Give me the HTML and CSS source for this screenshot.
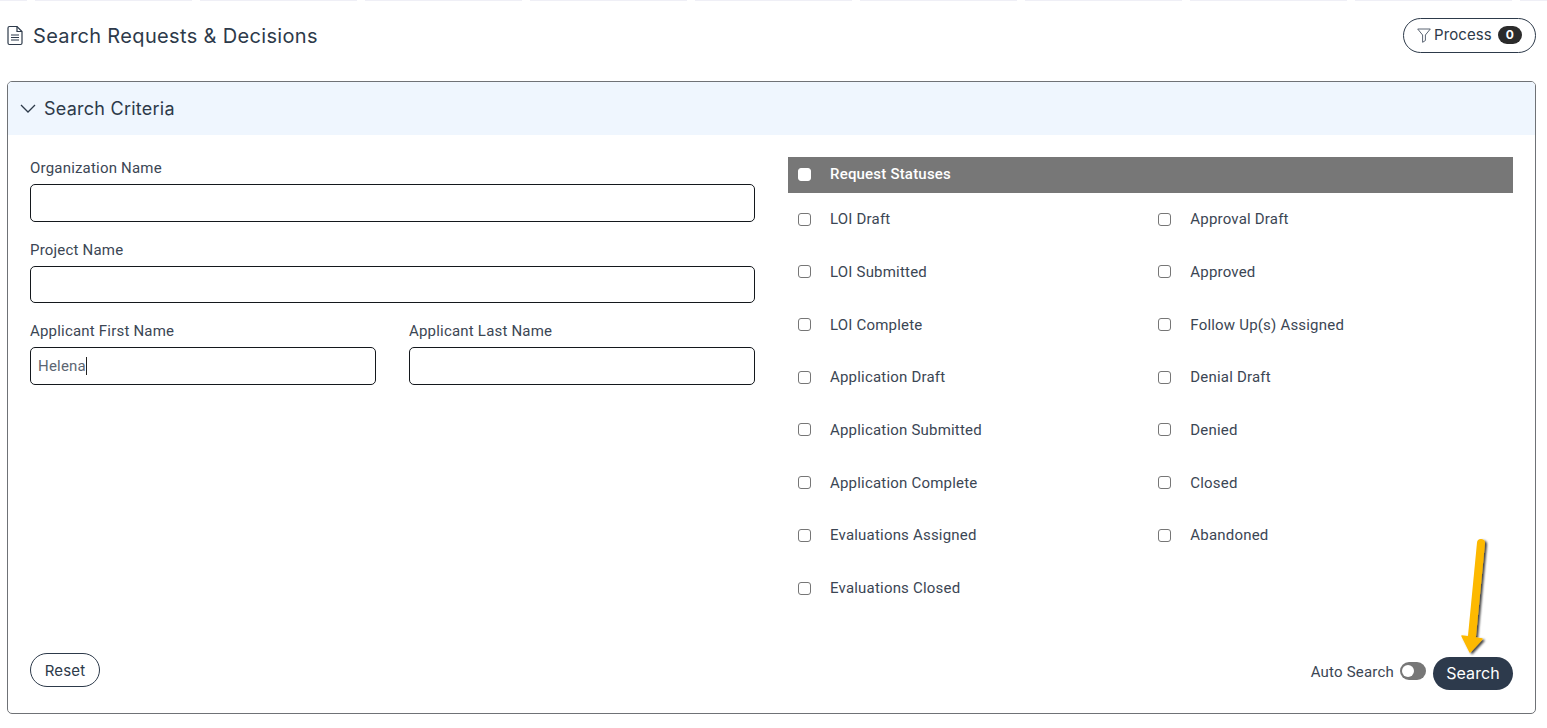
FILE: index.html
```html
<!DOCTYPE html>
<html lang="en">
<head>
    <meta charset="UTF-8">
    <title>Search Requests &amp; Decisions</title>
    <link rel="stylesheet" href="styles.css">
</head>
<body>
    <div class="top-strip"></div>
    <div class="page-header">
        <h1 class="page-title">
            <svg class="doc-icon" width="16" height="21" viewBox="0 0 16 20" fill="none" stroke="#2d3a4a" stroke-width="1.200">
                <path d="M2.500 1h7.500l5 5v11.500a1.500 1.500 0 0 1-1.500 1.500h-11a1.500 1.500 0 0 1-1.500-1.500v-15a1.500 1.500 0 0 1 1.500-1.500z"/>
                <path d="M10 1v5h5M4 9.500h8M4 12h8M4 14.500h8"/>
            </svg>
            Search Requests &amp; Decisions
        </h1>
        <button class="process-btn">
            <svg width="14" height="15" viewBox="0 0 14 15" fill="none" stroke="#5a6472" stroke-width="1">
                <path d="M.7 1h12.600l-4.900 6v5.500l-2.800 1.800v-7.300z"/>
            </svg>
            <span class="process-label">Process</span> <span class="count">0</span>
        </button>
    </div>

    <section class="panel">
        <div class="panel-head">
            <svg width="16" height="9" viewBox="0 0 16 9" fill="none" stroke="#2d3a4a" stroke-width="1.300">
                <path d="M1 1l7 7 7-7"/>
            </svg>
            Search Criteria
        </div>
        <div class="panel-body">
            <div class="columns">
                <div class="fields">
                    <div class="field">
                        <label>Organization Name</label>
                        <input type="text">
                    </div>
                    <div class="field">
                        <label>Project Name</label>
                        <input type="text">
                    </div>
                    <div class="field-row">
                        <div class="field">
                            <label>Applicant First Name</label>
                            <div class="input-fake">Helena<span class="caret"></span></div>
                        </div>
                        <div class="field">
                            <label>Applicant Last Name</label>
                            <input type="text">
                        </div>
                    </div>
                </div>
                <div class="statuses">
                    <div class="status-head">
                        <span class="box box-white"></span>
                        Request Statuses
                    </div>
                    <div class="status-grid">
                        <div class="status-col">
                            <div class="status"><span class="box"></span>LOI Draft</div>
                            <div class="status"><span class="box"></span>LOI Submitted</div>
                            <div class="status"><span class="box"></span>LOI Complete</div>
                            <div class="status"><span class="box"></span>Application Draft</div>
                            <div class="status"><span class="box"></span>Application Submitted</div>
                            <div class="status"><span class="box"></span>Application Complete</div>
                            <div class="status"><span class="box"></span>Evaluations Assigned</div>
                            <div class="status"><span class="box"></span>Evaluations Closed</div>
                        </div>
                        <div class="status-col">
                            <div class="status"><span class="box"></span>Approval Draft</div>
                            <div class="status"><span class="box"></span>Approved</div>
                            <div class="status"><span class="box"></span>Follow Up(s) Assigned</div>
                            <div class="status"><span class="box"></span>Denial Draft</div>
                            <div class="status"><span class="box"></span>Denied</div>
                            <div class="status"><span class="box"></span>Closed</div>
                            <div class="status"><span class="box"></span>Abandoned</div>
                        </div>
                    </div>
                </div>
            </div>
            <div class="panel-foot">
                <button class="reset-btn">Reset</button>
                <div class="foot-right">
                    <span class="auto-label">Auto Search</span>
                    <span class="toggle"><span class="knob"></span></span>
                    <button class="search-btn">Search</button>
                </div>
            </div>
        </div>
    </section>

    <svg class="arrow" width="40" height="125" viewBox="0 0 40 125">
        <defs>
            <filter id="arrow-shadow" x="-30%" y="-10%" width="170%" height="125%">
                <feDropShadow dx="2" dy="1.500" stdDeviation="1" flood-color="#000" flood-opacity="0.75"/>
            </filter>
        </defs>
        <g filter="url(#arrow-shadow)" fill="#fdb900" stroke="#fdb900">
            <path d="M23 5L14 98" stroke-width="8" stroke-linecap="round"/>
            <path d="M4 98L24 101L12 114Z" stroke-width="1.500" stroke-linejoin="round"/>
        </g>
    </svg>
</body>
</html>
```

FILE: styles.css
```css
* {
    box-sizing: border-box;
}

body {
    margin: 0;
    height: 728px;
    overflow: hidden;
    background-color: #fff;
    color: #2d3a4a;
    font-family: 'Roboto', sans-serif;
    font-size: 15px;
    letter-spacing: 0.2px;
}

.top-strip {
    height: 1px;
    background: repeating-linear-gradient(90deg, #efeff6 0, #efeff6 27px, #fff 27px, #fff 35px, #efeff6 35px, #efeff6 165px);
}

.page-header {
    display: flex;
    justify-content: space-between;
    align-items: center;
    height: 67px;
    padding: 0 11px 0 7px;
}

.page-title {
    display: flex;
    align-items: center;
    gap: 10px;
    margin: 2px 0 0;
    font-family: 'Inter', sans-serif;
    font-size: 20px;
    font-weight: 400;
    letter-spacing: 0.34px;
}

.process-btn {
    display: flex;
    align-items: center;
    gap: 3px;
    width: 133px;
    height: 35px;
    margin-top: 1px;
    padding: 0 0 0 13px;
    border: 1px solid #2d3a4a;
    border-radius: 18px;
    background: #fff;
    color: #2d3a4a;
    font-family: 'Inter', sans-serif;
    font-size: 15px;
    letter-spacing: 0.1px;
}

.process-label {
    margin-top: -2px;
}

.count {
    width: 24px;
    height: 18px;
    margin-left: 3px;
    border-radius: 9px;
    background-color: #2b2b2b;
    color: #fff;
    font-size: 12px;
    font-weight: 700;
    line-height: 18px;
    text-align: center;
}

.panel {
    display: flex;
    flex-direction: column;
    height: 633px;
    margin: 13px 11px 0 7px;
    border: 1px solid #6f7276;
    border-radius: 5px;
    overflow: hidden;
}

.panel-head {
    display: flex;
    align-items: center;
    gap: 8px;
    flex: none;
    height: 53px;
    padding-left: 12px;
    background-color: #eff6fe;
    font-family: 'Inter', sans-serif;
    font-size: 18px;
    letter-spacing: 0.25px;
}

.panel-body {
    display: flex;
    flex-direction: column;
    justify-content: space-between;
    flex: 1;
    padding: 22px 22px 23px;
}

.columns {
    display: grid;
    grid-template-columns: 725px 725px;
    gap: 33px;
}

.field {
    display: flex;
    flex-direction: column;
    margin-bottom: 17px;
}

.field label {
    height: 27px;
    padding-top: 2px;
    font-size: 15px;
    color: #3b4654;
}

.field input,
.input-fake {
    height: 37.500px;
    padding: 0 7px;
    border: 1px solid #14181d;
    border-radius: 5px;
    background: #fff;
    font-family: 'Roboto', sans-serif;
    font-size: 15px;
}

.input-fake {
    display: flex;
    align-items: center;
    color: #5c6672;
}

.caret {
    width: 1px;
    height: 18px;
    background-color: #222;
}

.field-row {
    display: grid;
    grid-template-columns: 346px 346px;
    gap: 33px;
}

.status-head {
    display: flex;
    align-items: center;
    height: 36px;
    padding: 0 0 2px 10px;
    background-color: #777;
    color: #fff;
    font-weight: 500;
    font-size: 15px;
}

.status-grid {
    display: grid;
    grid-template-columns: 360.300px 360.300px;
    margin-top: -0.300px;
}

.status {
    display: flex;
    align-items: center;
    height: 52.720px;
    padding-left: 10px;
    font-size: 15px;
    color: #3b4654;
}

.box {
    flex: none;
    width: 13px;
    height: 13px;
    margin-right: 19px;
    border: 1px solid #767676;
    border-radius: 3px;
    background: #fff;
}

.box-white {
    border-color: #fff;
}

.panel-foot {
    display: flex;
    justify-content: space-between;
    align-items: flex-end;
}

.reset-btn {
    width: 70px;
    height: 34px;
    margin-bottom: 3px;
    border: 1px solid #2d3a4a;
    border-radius: 17px;
    background: #fff;
    color: #2d3a4a;
    font-family: 'Inter', sans-serif;
    font-size: 15px;
    letter-spacing: 0.2px;
}

.foot-right {
    display: flex;
    align-items: center;
}

.auto-label {
    margin: 0 6px 3px 0;
    font-size: 15px;
    color: #3b4654;
}

.toggle {
    display: flex;
    align-items: center;
    width: 26px;
    height: 18px;
    margin: 0 7px 5px 0;
    padding-left: 2px;
    border-radius: 9px;
    background-color: #777;
}

.knob {
    width: 12px;
    height: 12px;
    border-radius: 50%;
    background-color: #fff;
}

.search-btn {
    width: 80px;
    height: 33px;
    padding: 0 0 2px;
    border: 0;
    border-radius: 17px;
    background-color: #2d3a4c;
    color: #fff;
    font-family: 'Inter', sans-serif;
    font-size: 16px;
    letter-spacing: 0.1px;
}

/* annotation drawn over the screenshot */
.arrow {
    position: absolute;
    left: 1458px;
    top: 538px;
}
```
